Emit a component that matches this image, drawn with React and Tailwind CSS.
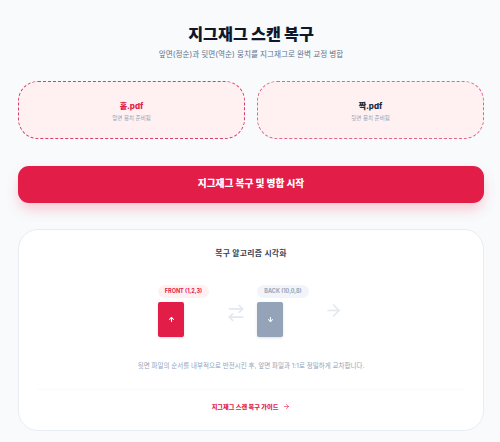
import React from 'react';
import { ArrowUp, ArrowDown, ArrowRight, ArrowRightLeft } from 'lucide-react';

const FileCard = ({ name, label, nameClass, borderClass }) => (
  <div className={`h-[58px] pt-[1px] rounded-[20px] border border-dashed bg-[#fff1f2] flex flex-col items-center justify-center ${borderClass}`}>
    <p className={`text-[8px] leading-[12px] font-extrabold ${nameClass}`}>{name}</p>
    <p className="mt-[3px] text-[5.5px] leading-[7px] text-[#94a3b8]">{label}</p>
  </div>
);

const App = () => {
  return (
    <div className="h-[442px] overflow-hidden bg-[#f8fafc] pl-[18px] pr-[16px] pt-[23px] font-['Inter','Noto_Sans_CJK_KR',sans-serif]">
      {/* 제목 */}
      <h1 className="text-center text-[16.2px] leading-[22px] font-black text-[#0f172a]">지그재그 스캔 복구</h1>
      <p className="mt-[5px] text-center text-[7.6px] leading-[10px] text-[#64748b]">앞면(정순)과 뒷면(역순) 뭉치를 지그재그로 완벽 교정 병합</p>

      {/* 파일 */}
      <div className="mt-[21px] grid grid-cols-2 gap-3">
        <FileCard name="홀.pdf" label="앞면 뭉치 준비됨" nameClass="text-[#e11d48]" borderClass="border-[#d6406a]" />
        <FileCard name="짝.pdf" label="뒷면 뭉치 준비됨" nameClass="text-[#1e293b]" borderClass="border-[#e0668a]" />
      </div>

      <button className="mt-[27px] block w-full h-[37px] rounded-[11px] bg-[#e11d48] text-[9.7px] font-extrabold text-white shadow-[0_7px_14px_-2px_rgba(244,63,94,0.3)]">
        지그재그 복구 및 병합 시작
      </button>

      {/* 시각화 */}
      <div className="mt-[26px] h-[202px] rounded-[20px] border border-[#e8edf3] bg-white pt-[18px]">
        <h2 className="text-center text-[7.8px] leading-[11px] font-bold tracking-[0.04em] text-[#334155]">복구 알고리즘 시각화</h2>

        <div className="mt-[26px] flex items-start pl-[139px]">
          <div className="w-[51px] flex flex-col items-start">
            <span className="w-full h-[13px] rounded-full bg-[#fff1f2] text-center text-[5.5px] leading-[13px] font-bold text-[#e11d48]">FRONT (1,2,3)</span>
            <div className="mt-[4px] w-[26px] h-[35px] rounded-[2px] bg-[#e11d48] flex items-center justify-center shadow-sm">
              <ArrowUp className="w-[7px] h-[7px] text-white" strokeWidth={3.5} />
            </div>
          </div>
          <ArrowRightLeft className="ml-[17px] mt-[18px] w-[20px] h-[20px] text-[#e2e8f0]" strokeWidth={2} />
          <div className="ml-[11px] w-[52px] flex flex-col items-start">
            <span className="w-full h-[13px] rounded-full bg-[#f1f5f9] text-center text-[5.5px] leading-[13px] font-bold text-[#94a3b8]">BACK (10,0,8)</span>
            <div className="mt-[4px] w-[26px] h-[35px] rounded-[2px] bg-[#94a3b8] flex items-center justify-center shadow-sm">
              <ArrowDown className="w-[7px] h-[7px] text-white" strokeWidth={3.5} />
            </div>
          </div>
          <ArrowRight className="ml-[15px] mt-[16px] w-[19px] h-[19px] text-[#e2e8f0]" strokeWidth={2} />
        </div>

        <p className="mt-[25px] text-center text-[6.5px] leading-[9px] text-[#94a3b8]">뒷면 파일의 순서를 내부적으로 반전시킨 후, 앞면 파일과 1:1로 정밀하게 교차합니다.</p>

        <div className="mx-[18px] mt-[18px] border-t border-[#f8fafc] pt-[12px] flex items-center justify-center gap-[5px]">
          <span className="text-[6.2px] leading-[9px] font-extrabold text-[#e11d48]">지그재그 스캔 복구 가이드</span>
          <ArrowRight className="w-[7px] h-[7px] text-[#e11d48]" strokeWidth={2} />
        </div>
      </div>
    </div>
  );
};

export default App;
